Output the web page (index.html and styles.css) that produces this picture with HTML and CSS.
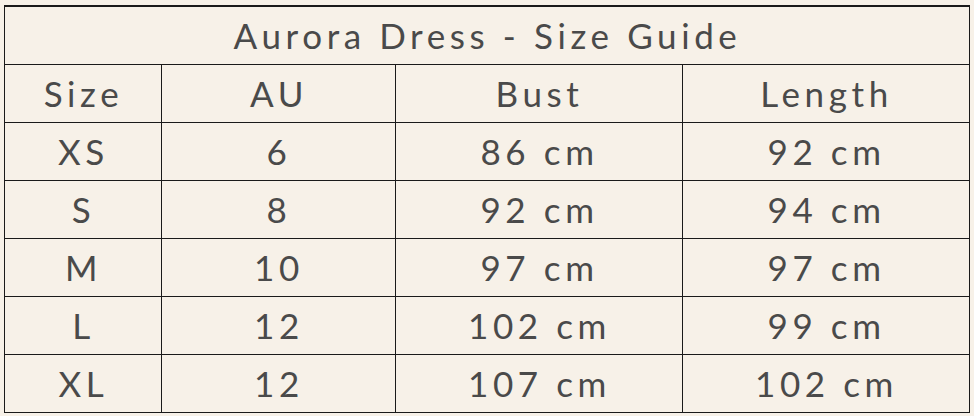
FILE: index.html
```html
<!DOCTYPE html>
<html>
<head>
<meta charset="utf-8">
<link rel="stylesheet" href="styles.css">
</head>
<body>
<div class="page">
<table class="guide">
<colgroup>
<col class="c1"><col class="c2"><col class="c3"><col class="c4">
</colgroup>
<tr class="title"><td colspan="4">Aurora Dress - Size Guide</td></tr>
<tr><td>Size</td><td>AU</td><td>Bust</td><td>Length</td></tr>
<tr><td>XS</td><td>6</td><td>86 cm</td><td>92 cm</td></tr>
<tr><td>S</td><td>8</td><td>92 cm</td><td>94 cm</td></tr>
<tr><td>M</td><td>10</td><td>97 cm</td><td>97 cm</td></tr>
<tr><td>L</td><td>12</td><td>102 cm</td><td>99 cm</td></tr>
<tr><td>XL</td><td>12</td><td>107 cm</td><td>102 cm</td></tr>
</table>
</div>
</body>
</html>
```
FILE: styles.css
```css
html, body {
  margin: 0;
  padding: 0;
  background: #f7f1e8;
}
.page {
  padding: 5px 0 0 4px;
}
.guide {
  border-collapse: collapse;
  table-layout: fixed;
  width: 966px;
  border-top: 2px solid #1a1a1a;
  font-family: Lato, "Open Sans", sans-serif;
  font-size: 35px;
  letter-spacing: 4.6px;
  color: #4a4a4a;
}
.c1 { width: 157px; }
.c2 { width: 234px; }
.c3 { width: 287px; }
.c4 { width: 287px; }
.guide td {
  border: 1px solid #1a1a1a;
  height: 57px;
  padding: 0 0 0 1px;
  text-align: center;
  vertical-align: middle;
  line-height: 1;
}
```
